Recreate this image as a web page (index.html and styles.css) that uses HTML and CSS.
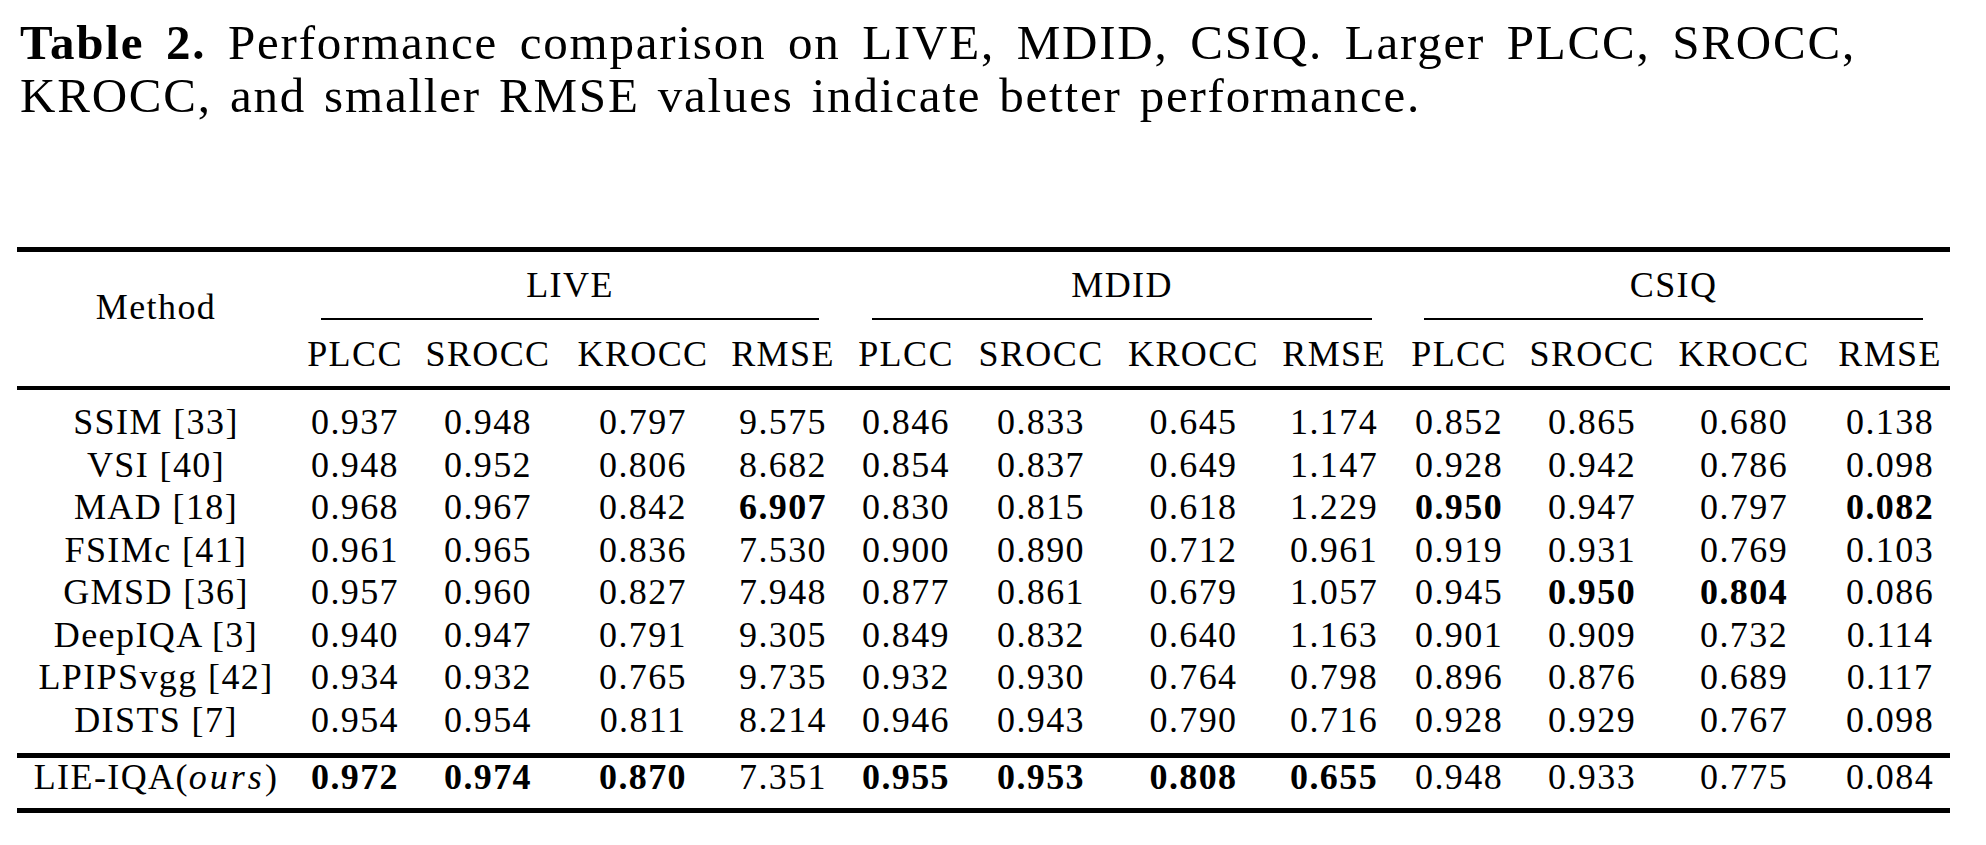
FILE: index.html
```html
<!DOCTYPE html>
<html lang="en">
<head>
<meta charset="utf-8">
<title>Table 2</title>
<link rel="stylesheet" href="styles.css">
</head>
<body>
<figure class="figure">
  <p class="caption"><span class="cap-line cap-first"><b>Table 2.</b> Performance comparison on LIVE, MDID, CSIQ. Larger PLCC, SROCC,</span><span class="cap-line">KROCC, and smaller RMSE values indicate better performance.</span></p>
  <table class="results">
    <colgroup>
      <col class="w-method">
      <col class="w-120"><col class="w-146"><col class="w-164"><col class="w-116">
      <col class="w-130"><col class="w-140"><col class="w-165"><col class="w-116">
      <col class="w-134"><col class="w-132"><col class="w-172"><col class="w-120">
    </colgroup>
    <thead>
      <tr class="group-row">
        <th class="method" rowspan="2">Method</th>
        <th class="group" colspan="4"><div class="group-label g-live">LIVE</div></th>
        <th class="group" colspan="4"><div class="group-label g-mdid">MDID</div></th>
        <th class="group" colspan="4"><div class="group-label g-csiq">CSIQ</div></th>
      </tr>
      <tr class="metric-row">
        <th>PLCC</th><th>SROCC</th><th>KROCC</th><th>RMSE</th>
        <th>PLCC</th><th>SROCC</th><th>KROCC</th><th>RMSE</th>
        <th>PLCC</th><th>SROCC</th><th>KROCC</th><th>RMSE</th>
      </tr>
    </thead>
    <tbody>
      <tr class="first">
        <td>SSIM [33]</td>
        <td>0.937</td><td>0.948</td><td>0.797</td><td>9.575</td>
        <td>0.846</td><td>0.833</td><td>0.645</td><td>1.174</td>
        <td>0.852</td><td>0.865</td><td>0.680</td><td>0.138</td>
      </tr>
      <tr>
        <td>VSI [40]</td>
        <td>0.948</td><td>0.952</td><td>0.806</td><td>8.682</td>
        <td>0.854</td><td>0.837</td><td>0.649</td><td>1.147</td>
        <td>0.928</td><td>0.942</td><td>0.786</td><td>0.098</td>
      </tr>
      <tr>
        <td>MAD [18]</td>
        <td>0.968</td><td>0.967</td><td>0.842</td><td><b>6.907</b></td>
        <td>0.830</td><td>0.815</td><td>0.618</td><td>1.229</td>
        <td><b>0.950</b></td><td>0.947</td><td>0.797</td><td><b>0.082</b></td>
      </tr>
      <tr>
        <td>FSIMc [41]</td>
        <td>0.961</td><td>0.965</td><td>0.836</td><td>7.530</td>
        <td>0.900</td><td>0.890</td><td>0.712</td><td>0.961</td>
        <td>0.919</td><td>0.931</td><td>0.769</td><td>0.103</td>
      </tr>
      <tr>
        <td>GMSD [36]</td>
        <td>0.957</td><td>0.960</td><td>0.827</td><td>7.948</td>
        <td>0.877</td><td>0.861</td><td>0.679</td><td>1.057</td>
        <td>0.945</td><td><b>0.950</b></td><td><b>0.804</b></td><td>0.086</td>
      </tr>
      <tr>
        <td>DeepIQA [3]</td>
        <td>0.940</td><td>0.947</td><td>0.791</td><td>9.305</td>
        <td>0.849</td><td>0.832</td><td>0.640</td><td>1.163</td>
        <td>0.901</td><td>0.909</td><td>0.732</td><td>0.114</td>
      </tr>
      <tr>
        <td>LPIPSvgg [42]</td>
        <td>0.934</td><td>0.932</td><td>0.765</td><td>9.735</td>
        <td>0.932</td><td>0.930</td><td>0.764</td><td>0.798</td>
        <td>0.896</td><td>0.876</td><td>0.689</td><td>0.117</td>
      </tr>
      <tr class="before-ours">
        <td>DISTS [7]</td>
        <td>0.954</td><td>0.954</td><td>0.811</td><td>8.214</td>
        <td>0.946</td><td>0.943</td><td>0.790</td><td>0.716</td>
        <td>0.928</td><td>0.929</td><td>0.767</td><td>0.098</td>
      </tr>
      <tr class="ours">
        <td>LIE-IQA(<i class="math">ours</i>)</td>
        <td><b>0.972</b></td><td><b>0.974</b></td><td><b>0.870</b></td><td>7.351</td>
        <td><b>0.955</b></td><td><b>0.953</b></td><td><b>0.808</b></td><td><b>0.655</b></td>
        <td>0.948</td><td>0.933</td><td>0.775</td><td>0.084</td>
      </tr>
    </tbody>
  </table>
</figure>
</body>
</html>
```
FILE: styles.css
```css
html, body {
  margin: 0;
  padding: 0;
  background: #ffffff;
  color: #000000;
}

body {
  font-family: "Liberation Serif", "Times New Roman", serif;
}

.figure {
  margin: 0;
  padding: 0;
}

/* ---------- caption ---------- */
.caption {
  margin: 0;
  padding: 16px 0 0 20px;
  width: 1836px;
  font-size: 49px;
  line-height: 53px;
  letter-spacing: 1.8px;
  word-spacing: 4px;
}

.cap-line {
  display: block;
  white-space: nowrap;
}

.cap-first {
  text-align: justify;
  text-align-last: justify;
  white-space: normal;
}

.caption b {
  font-weight: bold;
}

/* ---------- table ---------- */
.results {
  margin: 125px 0 0 17px;
  width: 1933px;
  table-layout: fixed;
  border-collapse: separate;
  border-spacing: 0;
  font-size: 36px;
  letter-spacing: 1.4px;
}

.w-method { width: 278px; }
.w-116 { width: 116px; }
.w-120 { width: 120px; }
.w-130 { width: 130px; }
.w-132 { width: 132px; }
.w-134 { width: 134px; }
.w-140 { width: 140px; }
.w-146 { width: 146px; }
.w-164 { width: 164px; }
.w-165 { width: 165px; }
.w-172 { width: 172px; }

.results th,
.results td {
  padding: 0;
  text-align: center;
  white-space: nowrap;
  font-weight: normal;
}

.results b {
  font-weight: bold;
}

/* header: top rule, cmidrules, midrule */
.results th.method {
  vertical-align: top;
  padding-top: 35px;
  border-top: 5px solid #000;
  border-bottom: 4px solid #000;
  line-height: 40px;
}

.results th.group {
  border-top: 5px solid #000;
  vertical-align: top;
}

.group-label {
  padding: 13px 0 13px;
  line-height: 40px;
  border-bottom: 2px solid #000;
}

.g-live { margin: 0 22px 0 26px; }
.g-mdid { margin: 0 20px 0 31px; }
.g-csiq { margin: 0 27px 0 32px; }

.metric-row th {
  padding: 14px 0 12px;
  line-height: 40px;
  border-bottom: 4px solid #000;
}

/* body rows */
.results tbody td {
  line-height: 42.5px;
}

.results tr.first td {
  padding-top: 11.35px;
}

.results tr.before-ours td {
  padding-bottom: 11.65px;
}

.results tr.ours td {
  line-height: 34.3px;
  padding-top: 2.5px;
  padding-bottom: 13.2px;
  border-top: 5px solid #000;
  border-bottom: 5px solid #000;
}

.math {
  font-style: italic;
  letter-spacing: 3px;
}
```
